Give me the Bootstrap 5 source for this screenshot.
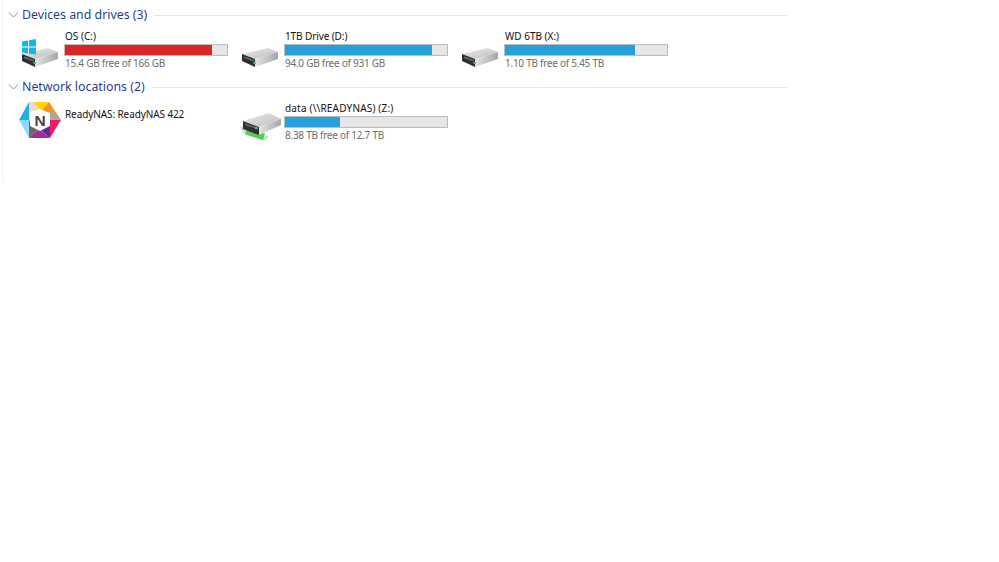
<!DOCTYPE html>
<html lang="en">
<head>
<meta charset="utf-8">
<title>This PC</title>
<link href="https://cdn.jsdelivr.net/npm/bootstrap@5.3.0/dist/css/bootstrap.min.css" rel="stylesheet">
<style>
body{background:#fff;font-family:"Noto Sans","Open Sans",sans-serif;overflow:hidden}
.pane{width:786px;height:183px;margin-left:2px;border-left:1px solid #f3f3f3;padding-top:4px}
.grp-head{height:22px;color:#1f3f94;font-size:12.35px;line-height:22px;white-space:nowrap;gap:3px;padding-left:5px}
.grp-head svg{flex:none}
.grp-line{flex:1;height:1px;background:#e6e6e6;margin-left:4px}
.grp-net{margin-top:4px}
.tile{width:220px;height:44px;padding-left:17px;flex:none}
.tiles{height:46px}
.tile-ico{width:45px;height:44px;flex:none;display:block;overflow:visible}
.tile-body{width:163px;flex:none;padding-top:3px}
.tile-name{font-size:10px;line-height:14px;color:#111;white-space:nowrap}
.tile-name.wide{letter-spacing:.18px}
.tile-name.tight{letter-spacing:-.1px}
.tile-bar{height:12px;width:164px;margin-left:-1px;border:1px solid #bcbcbc;background:#e6e6e6;margin-top:1px}
.tile-fill{height:100%;background:#26a0da}
.tile-fill.low{background:#da2626}
.tile-sub{font-size:10px;line-height:14px;color:#6d6d6d;white-space:nowrap;letter-spacing:-.26px}
.nas-name{padding-top:9px}
</style>
</head>
<body>
<svg width="0" height="0" class="position-absolute">
<defs>
<linearGradient id="topg" x1="0" y1="0" x2="1" y2="1"><stop offset="0" stop-color="#ececec"/><stop offset="1" stop-color="#bcbcbc"/></linearGradient>
<linearGradient id="sideg" x1="0" y1="0" x2="1" y2="0"><stop offset="0" stop-color="#e4e4e4"/><stop offset="1" stop-color="#a6a6a6"/></linearGradient>
<symbol id="drive" viewBox="0 0 45 44">
<polygon points="2,28 28,22 38,26 15,33" fill="url(#topg)"/>
<polygon points="2,28 15,33 15,41 2,35" fill="#2f2f2f"/>
<polygon points="4,30.500 14,34 14,35.500 4,32" fill="#6f6f6f"/>
<polygon points="15,33 38,26 38,33 15,41" fill="url(#sideg)"/>
<rect x="13.500" y="36" width="2.500" height="2" fill="#3fd07a"/>
</symbol>
</defs>
</svg>
<div class="pane">
  <div class="grp-head d-flex align-items-center">
    <svg width="11" height="6" viewBox="0 0 11 6"><path d="M1 .5 5.500 5 10 .5" fill="none" stroke="#8a8a8a"/></svg>
    <span>Devices and drives (3)</span><span class="grp-line"></span>
  </div>
  <div class="tiles d-flex">
    <div class="tile d-flex">
      <svg class="tile-ico" viewBox="0 0 45 44">
        <use href="#drive" width="45" height="44"/>
        <path d="M2 15.500 8 14.500V20.500H2ZM9 14.300 16 13V20.500H9ZM2 21.500H8V27.500L2 26.500ZM9 21.500H16V28.500L9 27.700Z" fill="#12b5ea"/>
      </svg>
      <div class="tile-body"><div class="tile-name">OS (C:)</div><div class="tile-bar"><div class="tile-fill low" style="width:91%"></div></div><div class="tile-sub">15.4 GB free of 166 GB</div></div>
    </div>
    <div class="tile d-flex">
      <svg class="tile-ico" viewBox="0 0 45 44"><use href="#drive" width="45" height="44"/></svg>
      <div class="tile-body"><div class="tile-name tight">1TB Drive (D:)</div><div class="tile-bar"><div class="tile-fill" style="width:90.500%"></div></div><div class="tile-sub">94.0 GB free of 931 GB</div></div>
    </div>
    <div class="tile d-flex">
      <svg class="tile-ico" viewBox="0 0 45 44"><use href="#drive" width="45" height="44"/></svg>
      <div class="tile-body"><div class="tile-name">WD 6TB (X:)</div><div class="tile-bar"><div class="tile-fill" style="width:80.500%"></div></div><div class="tile-sub">1.10 TB free of 5.45 TB</div></div>
    </div>
  </div>
  <div class="grp-head grp-net d-flex align-items-center">
    <svg width="11" height="6" viewBox="0 0 11 6"><path d="M1 .5 5.500 5 10 .5" fill="none" stroke="#8a8a8a"/></svg>
    <span>Network locations (2)</span><span class="grp-line"></span>
  </div>
  <div class="tiles d-flex">
    <div class="tile d-flex">
      <svg class="tile-ico" viewBox="0 0 45 44">
        <g transform="translate(-3 3)">
        <polygon points="12,1 2,19 12,19" fill="#1fb0ec"/>
        <polygon points="12,1 22,1 22,11 12,19" fill="#e8dcc8"/>
        <polygon points="17,1 32,1 24,10" fill="#ffd400"/>
        <polygon points="32,1 24,10 33,19 44,19" fill="#f7941d"/>
        <polygon points="33,9 44,19 33,19" fill="#a9a7a3"/>
        <polygon points="33,19 44,19 33,37" fill="#ed1c6b"/>
        <polygon points="33,19 33,37 22,28" fill="#5c2d91"/>
        <polygon points="22,28 33,37 12,37" fill="#a32c9b"/>
        <polygon points="12,19 22,28 12,37" fill="#6d6661"/>
        <polygon points="2,19 12,19 12,37" fill="#8fd8f8"/>
        <polygon points="13,11 23,8 33,12 33,25 23,30 13,25" fill="#fff"/>
        <text x="23" y="25" text-anchor="middle" font-family="Liberation Sans" font-weight="700" font-size="15.500" fill="#4a4441">N</text>
        </g>
      </svg>
      <div class="tile-body nas-name"><div class="tile-name tight">ReadyNAS: ReadyNAS 422</div></div>
    </div>
    <div class="tile d-flex">
      <svg class="tile-ico" viewBox="0 0 45 44">
        <path d="M1 29 5 34 24 41 28 38" fill="none" stroke="#cfd8cf" stroke-width="2.500"/>
        <path d="M6 33 24 39" fill="none" stroke="#4fd04f" stroke-width="7"/>
        <polygon points="3,23 29,15 41,21 19,29" fill="url(#topg)"/>
        <polygon points="3,23 19,29 19,37 3,31" fill="#2f2f2f"/>
        <polygon points="5,25.500 18,30 18,31.500 5,27" fill="#6f6f6f"/>
        <polygon points="19,29 41,21 41,27 19,37" fill="url(#sideg)"/>
        <rect x="15" y="29" width="2.500" height="2" fill="#3fd07a"/>
      </svg>
      <div class="tile-body"><div class="tile-name wide">data (\\READYNAS) (Z:)</div><div class="tile-bar"><div class="tile-fill" style="width:34%"></div></div><div class="tile-sub">8.38 TB free of 12.7 TB</div></div>
    </div>
  </div>
</div>
<script src="https://cdn.jsdelivr.net/npm/bootstrap@5.3.0/dist/js/bootstrap.bundle.min.js"></script>
</body>
</html>
